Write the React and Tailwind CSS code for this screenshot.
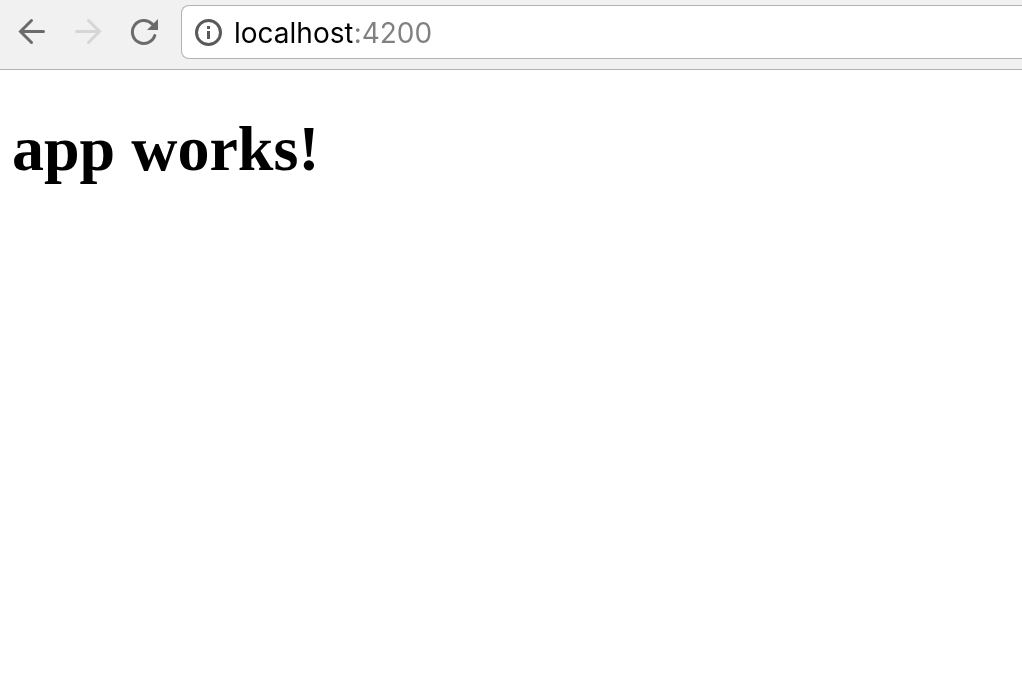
function NavButton({ label, disabled, children }) {
  return (
    <button type="button" aria-label={label} disabled={disabled} className="size-7 shrink-0 text-[#6b6b6b] disabled:text-[#d6d6d6]">
      <svg viewBox="0 0 28 28" className="size-7" fill="none" stroke="currentColor" strokeWidth="3" strokeLinecap="round" aria-hidden="true">
        {children}
      </svg>
    </button>
  );
}

export default function App() {
  return (
    <div className="min-h-screen bg-white text-black">
      <header className="flex items-center border-b border-[#b2b2b2] bg-[#f1f1f1] pt-[5px] pb-[10px]">
        <nav className="flex gap-7 pr-[23px] pl-[18px]" aria-label="History">
          <NavButton label="Back">
            <path d="M25.5 13.5H3M13.5 2.5L2.5 13.5L13.5 24.5" />
          </NavButton>
          <NavButton label="Forward" disabled>
            <path d="M2.5 13.5H25M14.5 2.5L25.5 13.5L14.5 24.5" />
          </NavButton>
          <NavButton label="Reload">
            <path d="M24.8 17.6A11.5 11.5 0 1 1 22.1 5.9" />
            <path d="M28 1V12H17Z" fill="currentColor" stroke="none" />
          </NavButton>
        </nav>
        <div className="flex h-[54px] min-w-0 flex-1 items-center rounded-l-lg border border-r-0 border-[#b2b2b2] bg-white pl-3">
          <button type="button" aria-label="View site information" className="size-7 shrink-0 text-[#5a5a5a]">
            <svg viewBox="0 0 28 28" className="size-7" fill="none" aria-hidden="true">
              <circle cx="14.5" cy="14.5" r="12" stroke="currentColor" strokeWidth="3" />
              <path d="M13 8H16V11H13ZM13 13H16V21H13Z" fill="currentColor" />
            </svg>
          </button>
          <input
            type="text"
            aria-label="Address"
            defaultValue="localhost:4200"
            spellCheck={false}
            className="ml-3 h-10 min-w-0 flex-1 bg-[linear-gradient(to_right,#000_118px,#808080_118px)] bg-clip-text pt-0.5 font-['Inter','Liberation_Sans',sans-serif] text-[28px] text-transparent caret-black outline-none"
          />
        </div>
      </header>
      <main className="px-3 py-11">
        <h1 className="font-['Liberation_Serif',serif] text-[64px] leading-[70px] font-bold">app works!</h1>
      </main>
    </div>
  );
}
